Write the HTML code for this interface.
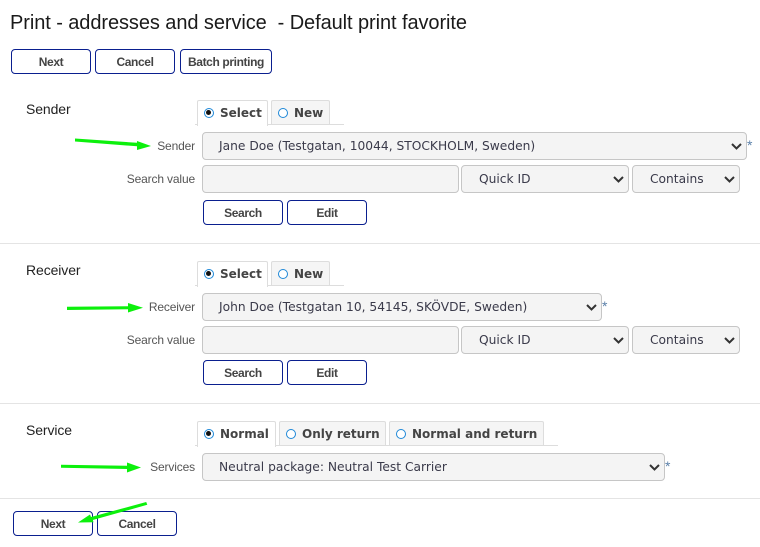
<!DOCTYPE html>
<html><head><meta charset="utf-8">
<style>
html,body{margin:0;padding:0;background:#fff;}
#p{position:relative;width:760px;height:547px;overflow:hidden;background:#fff;font-family:"Liberation Sans",sans-serif;}
#p>*{position:absolute;box-sizing:border-box;}
.t{white-space:pre;color:#111;}
.h{left:10px;top:10px;font-size:20px;line-height:26px;color:#1a1a1a;letter-spacing:-.08px;}
.b{height:25px;width:80px;border:1px solid #0a1f8f;border-radius:4px;background:#fff;color:#444;font-weight:bold;font-size:12px;line-height:24px;text-align:center;letter-spacing:-.38px;}
.s{font-size:14px;line-height:18px;color:#222;left:26px;letter-spacing:-.1px;}
.l{font-size:12px;line-height:16px;color:#555;right:565px;text-align:right;letter-spacing:-.15px;}
.f{height:28px;border:1px solid #c6c6c6;border-radius:4px;background:#f4f4f4;font-family:"DejaVu Sans",sans-serif;font-size:12.25px;line-height:26px;color:#3a3a4a;padding-left:16px;white-space:pre;}
.f svg{position:absolute;right:4px;top:10px;width:11px;height:7px;}
.tab{height:25px;border:1px solid #ddd;border-bottom:none;background:#f5f5f5;border-radius:2px 2px 0 0;font-family:"DejaVu Sans",sans-serif;font-weight:bold;font-size:12px;line-height:25px;color:#444;white-space:pre;}
.tab.on{background:#fff;height:26px;z-index:2;}
.tab i{position:absolute;left:6px;top:7px;width:10px;height:10px;border:1.3px solid #1e88d8;border-radius:50%;box-sizing:border-box;background:#fff;}
.tab.on i::after{content:"";position:absolute;left:1px;top:1px;width:5.400px;height:5.400px;background:#111;border-radius:50%;}
.tab span{position:absolute;left:22px;top:0;}
.ln{height:1px;background:#ddd;}
.d{left:0;width:760px;height:1px;background:#e4e4e4;}
.st{font-size:14px;color:#5a7fa8;line-height:12px;}
</style></head><body>
<div id="p">
<div class="t h">Print - addresses and service  - Default print favorite</div>

<div class="b" style="left:11px;top:49px">Next</div>
<div class="b" style="left:95px;top:49px">Cancel</div>
<div class="b" style="left:180px;top:49px;width:92px">Batch printing</div>

<div class="s" style="top:100px">Sender</div>
<div class="tab on" style="left:197px;top:100px;width:71px"><i></i><span>Select</span></div>
<div class="tab" style="left:271px;top:100px;width:59px"><i></i><span>New</span></div>
<div class="ln" style="left:195px;top:124px;width:149px"></div>
<div class="l" style="top:138px">Sender</div>
<div class="f" style="left:202px;top:132px;width:545px">Jane Doe (Testgatan, 10044, STOCKHOLM, Sweden)<svg viewBox="0 0 11 7"><path d="M1 1l4.500 4.500L10 1" fill="none" stroke="#333" stroke-width="2"/></svg></div>
<div class="st" style="left:747px;top:139px">*</div>
<div class="l" style="top:171px">Search value</div>
<div class="f" style="left:202px;top:165px;width:257px"></div>
<div class="f" style="left:461px;top:165px;width:168px;padding-left:17px">Quick ID<svg viewBox="0 0 11 7"><path d="M1 1l4.500 4.500L10 1" fill="none" stroke="#333" stroke-width="2"/></svg></div>
<div class="f" style="left:632px;top:165px;width:108px;padding-left:17px">Contains<svg viewBox="0 0 11 7"><path d="M1 1l4.500 4.500L10 1" fill="none" stroke="#333" stroke-width="2"/></svg></div>
<div class="b" style="left:203px;top:200px">Search</div>
<div class="b" style="left:287px;top:200px">Edit</div>
<div class="d" style="top:243px"></div>

<div class="s" style="top:261px">Receiver</div>
<div class="tab on" style="left:197px;top:261px;width:71px"><i></i><span>Select</span></div>
<div class="tab" style="left:271px;top:261px;width:59px"><i></i><span>New</span></div>
<div class="ln" style="left:195px;top:285px;width:149px"></div>
<div class="l" style="top:299px">Receiver</div>
<div class="f" style="left:202px;top:293px;width:400px">John Doe (Testgatan 10, 54145, SKÖVDE, Sweden)<svg viewBox="0 0 11 7"><path d="M1 1l4.500 4.500L10 1" fill="none" stroke="#333" stroke-width="2"/></svg></div>
<div class="st" style="left:602px;top:300px">*</div>
<div class="l" style="top:332px">Search value</div>
<div class="f" style="left:202px;top:326px;width:257px"></div>
<div class="f" style="left:461px;top:326px;width:168px;padding-left:17px">Quick ID<svg viewBox="0 0 11 7"><path d="M1 1l4.500 4.500L10 1" fill="none" stroke="#333" stroke-width="2"/></svg></div>
<div class="f" style="left:632px;top:326px;width:108px;padding-left:17px">Contains<svg viewBox="0 0 11 7"><path d="M1 1l4.500 4.500L10 1" fill="none" stroke="#333" stroke-width="2"/></svg></div>
<div class="b" style="left:203px;top:360px">Search</div>
<div class="b" style="left:287px;top:360px">Edit</div>
<div class="d" style="top:403px"></div>

<div class="s" style="top:421px">Service</div>
<div class="tab on" style="left:197px;top:421px;width:79px"><i></i><span>Normal</span></div>
<div class="tab" style="left:279px;top:421px;width:107px"><i></i><span>Only return</span></div>
<div class="tab" style="left:389px;top:421px;width:155px"><i></i><span>Normal and return</span></div>
<div class="ln" style="left:195px;top:445px;width:363px"></div>
<div class="l" style="top:459px">Services</div>
<div class="f" style="left:202px;top:453px;width:463px">Neutral package: Neutral Test Carrier<svg viewBox="0 0 11 7"><path d="M1 1l4.500 4.500L10 1" fill="none" stroke="#333" stroke-width="2"/></svg></div>
<div class="st" style="left:665px;top:460px">*</div>
<div class="d" style="top:498px"></div>

<div class="b" style="left:13px;top:511px">Next</div>
<div class="b" style="left:97px;top:511px">Cancel</div>

<svg style="left:0;top:0;z-index:5" width="760" height="547" viewBox="0 0 760 547">
<g fill="#0cf00c" stroke="none">
<path d="M75 138.500L137 142.800V141L151 146 137 150V146.300L75 141.500z"/>
<path d="M67 306.800L128 306.200V303L143 307.700 128 312.500V309.200L67 310z"/>
<path d="M61 464.800L127 465.700V462.500L141 467.500 127 472.500V469L61 467.800z"/>
<path d="M146.200 502L147.300 504.800 92.800 520 93.500 522.300 78 522.500 90 514.500 91 517z"/>
</g>
</svg>
</div>
</body></html>
